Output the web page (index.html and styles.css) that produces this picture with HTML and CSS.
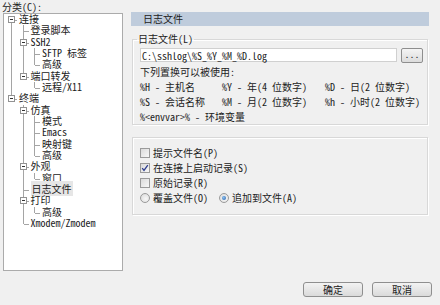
FILE: index.html
```html
<!DOCTYPE html>
<html lang="zh-CN">
<head>
    <meta charset="UTF-8">
    <meta name="viewport" content="width=device-width, initial-scale=1.0">
    <title>会话选项 - 日志文件</title>
    <link rel="stylesheet" href="styles.css">
</head>
<body>
<div class="dialog">
    <div class="main">
        <div class="side">
            <div class="side-label">分类(C):</div>
            <div class="tree-box">
                <ul class="tree">
                    <li><span class="row"><i class="box"></i>连接</span>
                        <ul>
                            <li><span class="row">登录脚本</span></li>
                            <li><span class="row"><i class="box"></i>SSH2</span>
                                <ul>
                                    <li><span class="row">SFTP 标签</span></li>
                                    <li><span class="row">高级</span></li>
                                </ul>
                            </li>
                            <li><span class="row"><i class="box"></i>端口转发</span>
                                <ul>
                                    <li><span class="row">远程/X11</span></li>
                                </ul>
                            </li>
                        </ul>
                    </li>
                    <li><span class="row"><i class="box"></i>终端</span>
                        <ul>
                            <li><span class="row"><i class="box"></i>仿真</span>
                                <ul>
                                    <li><span class="row">模式</span></li>
                                    <li><span class="row">Emacs</span></li>
                                    <li><span class="row">映射键</span></li>
                                    <li><span class="row">高级</span></li>
                                </ul>
                            </li>
                            <li><span class="row"><i class="box"></i>外观</span>
                                <ul>
                                    <li><span class="row">窗口</span></li>
                                </ul>
                            </li>
                            <li><span class="row"><span class="selected">日志文件</span></span></li>
                            <li><span class="row"><i class="box"></i>打印</span>
                                <ul>
                                    <li><span class="row">高级</span></li>
                                </ul>
                            </li>
                            <li><span class="row">Xmodem/Zmodem</span></li>
                        </ul>
                    </li>
                </ul>
            </div>
        </div>

        <div class="panel">
            <div class="panel-title">日志文件</div>

            <fieldset class="group">
                <legend>日志文件(L)</legend>
                <div class="file-row">
                    <div class="file-input">C:\sshlog\%S_%Y_%M_%D.log</div>
                    <div class="browse">...</div>
                </div>
                <p class="hint">下列置换可以被使用:</p>
                <div class="subst">
                    <span>%H - 主机名</span>
                    <span>%Y - 年(4 位数字)</span>
                    <span>%D - 日(2 位数字)</span>
                    <span>%S - 会话名称</span>
                    <span>%M - 月(2 位数字)</span>
                    <span>%h - 小时(2 位数字)</span>
                    <span class="wide">%&lt;envvar&gt;% - 环境变量</span>
                </div>
            </fieldset>

            <fieldset class="group options">
                <div class="opt"><span class="cb"></span>提示文件名(P)</div>
                <div class="opt"><span class="cb"><svg width="8" height="8" viewBox="0 0 8 8"><path d="M1.2 4.2 L3 6.4 L6.8 1.2" fill="none" stroke="#2d3d8e" stroke-width="1.3"/></svg></span>在连接上启动记录(S)</div>
                <div class="opt"><span class="cb"></span>原始记录(R)</div>
                <div class="radios">
                    <div class="opt radio-opt"><span class="rb"></span>覆盖文件(O)</div>
                    <div class="opt"><span class="rb on"></span>追加到文件(A)</div>
                </div>
            </fieldset>
        </div>
    </div>

    <div class="footer">
        <div class="btn">确定</div>
        <div class="btn">取消</div>
    </div>
</div>
</body>
</html>
```

FILE: styles.css
```css
body {
    margin: 0;
    background-color: #f0f0f0;
    font-family: "Noto Sans Mono CJK SC", "Noto Sans CJK SC", sans-serif;
    font-size: 10px;
    color: #222;
}

.dialog {
    width: 440px;
    height: 305px;
    overflow: hidden;
}

.main {
    display: flex;
    align-items: flex-start;
}

/* left: category tree */
.side {
    width: 123px;
    padding-left: 2px;
    box-sizing: border-box;
}

.side-label {
    height: 13px;
    line-height: 13px;
}

.tree-box {
    margin-left: 1px;
    width: 120px;
    height: 258px;
    box-sizing: border-box;
    border: 1px solid #ababab;
    background-color: #fff;
}

.tree, .tree ul {
    list-style: none;
    margin: 0;
    padding: 0;
}

.tree {
    padding-left: 4px;
}

.tree ul {
    padding-left: 11.5px;
}

.tree li {
    position: relative;
}

.tree li::before {
    content: "";
    position: absolute;
    left: 3px;
    top: 0;
    bottom: 0;
    border-left: 1px solid #a5a5a5;
}

.tree li:last-child::before {
    bottom: auto;
    height: 6px;
}

.tree > li:first-child::before {
    top: 6px;
}

.row {
    display: block;
    position: relative;
    height: 11.33px;
    line-height: 9px;
    padding-left: 11px;
    white-space: nowrap;
}

.row::before {
    content: "";
    position: absolute;
    left: 4px;
    top: 6px;
    width: 5px;
    border-top: 1px solid #a5a5a5;
}

.box {
    position: absolute;
    left: 0;
    top: 2px;
    width: 7px;
    height: 7px;
    box-sizing: border-box;
    border: 1px solid #929292;
    background-color: #fff;
    z-index: 1;
}

.box::after {
    content: "";
    position: absolute;
    left: 1px;
    top: 2px;
    width: 3px;
    border-top: 1px solid #333;
}

.selected {
    background-color: #e6e6e6;
    padding: 0 1px;
}

/* right: settings panel */
.panel {
    width: 298px;
    margin-left: 8px;
    padding-top: 12px;
}

.panel-title {
    height: 14px;
    line-height: 14px;
    padding-left: 12px;
    background-color: #bfccdc;
    color: #222;
}

.group {
    margin: 7px 1px 0 1px;
    padding: 3px 0 0 7px;
    border: 1px solid #d8d8d8;
    box-shadow: 1px 1px 0 #fff, inset 1px 1px 0 #fff;
    min-inline-size: 0;
}

.group legend {
    padding: 0 1px;
    margin-left: -3px;
    line-height: 12px;
}

.file-row {
    display: flex;
    align-items: flex-start;
    gap: 4px;
}

.file-input {
    width: 257px;
    height: 14px;
    line-height: 13px;
    box-sizing: border-box;
    border: 1px solid #d0d0d0;
    background-color: #fff;
    padding-left: 1px;
    white-space: nowrap;
}

.browse {
    width: 22px;
    height: 15px;
    box-sizing: border-box;
    border: 1px solid #8e8e8e;
    border-radius: 2px;
    background: linear-gradient(#f4f4f4, #dcdcdc);
    text-align: center;
    line-height: 10px;
    font-size: 10px;
}

.hint {
    margin: 2px 0 0 0;
    line-height: 14px;
}

.subst {
    display: grid;
    grid-template-columns: 82px 103px auto;
    line-height: 15px;
    white-space: nowrap;
}

.subst .wide {
    grid-column: 1 / 4;
}

.options {
    margin-top: 12px;
    padding: 7px 0 9px 7px;
}

.opt {
    display: flex;
    align-items: center;
    gap: 3px;
    height: 15px;
    white-space: nowrap;
}

.radios {
    display: flex;
}

.radio-opt {
    width: 79px;
}

.cb {
    display: flex;
    align-items: center;
    justify-content: center;
    width: 10px;
    height: 10px;
    box-sizing: border-box;
    border: 1px solid #9a9a9a;
    background: linear-gradient(135deg, #dadada, #f7f7f7);
}

.rb {
    width: 10px;
    height: 10px;
    box-sizing: border-box;
    border: 1px solid #9a9a9a;
    border-radius: 50%;
    background: radial-gradient(circle at 60% 60%, #f8f8f8, #d8d8d8);
    position: relative;
}

.rb.on::after {
    content: "";
    position: absolute;
    left: 2px;
    top: 2px;
    width: 4px;
    height: 4px;
    border-radius: 50%;
    background: radial-gradient(circle at 40% 40%, #8cc2f0, #1d58a8);
}

/* dialog buttons */
.footer {
    display: flex;
    justify-content: flex-end;
    gap: 9px;
    margin-top: 11px;
    padding-right: 8px;
}

.btn {
    width: 60px;
    height: 15px;
    box-sizing: border-box;
    border: 1px solid #8f8f8f;
    border-radius: 3px;
    background: linear-gradient(#f3f3f3, #dadada);
    text-align: center;
    line-height: 13px;
}
```
